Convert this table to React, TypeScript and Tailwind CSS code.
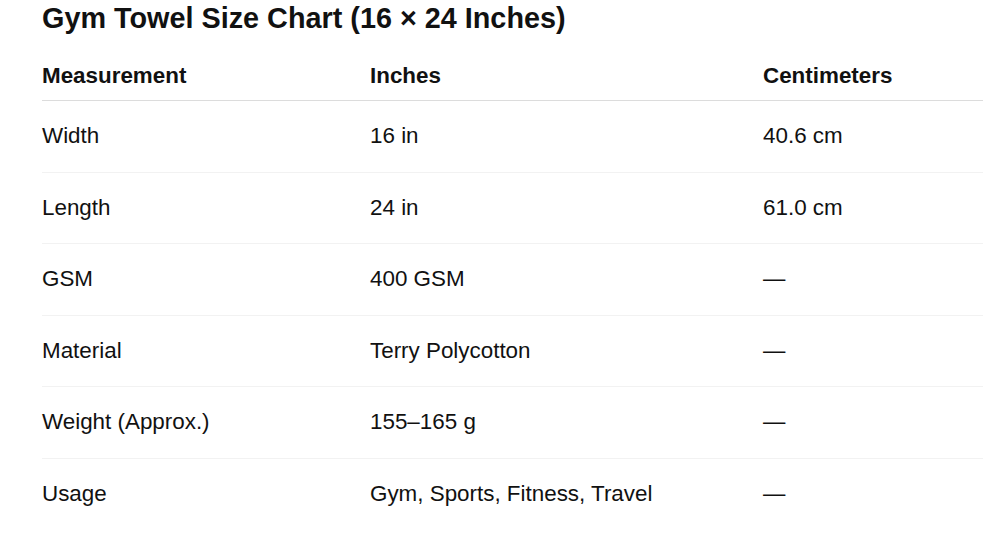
const ROWS = [
  { label: 'Width', inches: '16 in', cm: '40.6 cm' },
  { label: 'Length', inches: '24 in', cm: '61.0 cm' },
  { label: 'GSM', inches: '400 GSM', cm: '—' },
  { label: 'Material', inches: 'Terry Polycotton', cm: '—' },
  { label: 'Weight (Approx.)', inches: '155–165 g', cm: '—' },
  { label: 'Usage', inches: 'Gym, Sports, Fitness, Travel', cm: '—' },
];

export default function App() {
  return (
    <div className="min-h-screen bg-white pl-[42px] text-[#111] font-['Liberation_Sans',Arial,sans-serif]">
      <h1 className="text-[28.8px] font-bold leading-[36px] mb-[14px]">
        Gym Towel Size Chart (16 × 24 Inches)
      </h1>
      <table className="w-[941px] border-collapse text-left text-[22.4px]">
        <thead>
          <tr className="border-b border-[#dcdcdc]">
            <th className="w-[328px] pt-[13px] pb-[11px] leading-[26px] font-bold">Measurement</th>
            <th className="w-[393px] pt-[13px] pb-[11px] leading-[26px] font-bold">Inches</th>
            <th className="pt-[13px] pb-[11px] leading-[26px] font-bold">Centimeters</th>
          </tr>
        </thead>
        <tbody>
          {ROWS.map((r) => (
            <tr key={r.label} className="border-b border-[#f2f2f2] last:border-b-0">
              <td className="py-[23px] leading-[24.6px] font-normal">{r.label}</td>
              <td className="py-[23px] leading-[24.6px] font-normal">{r.inches}</td>
              <td className="py-[23px] leading-[24.6px] font-normal">{r.cm}</td>
            </tr>
          ))}
        </tbody>
      </table>
    </div>
  );
}
